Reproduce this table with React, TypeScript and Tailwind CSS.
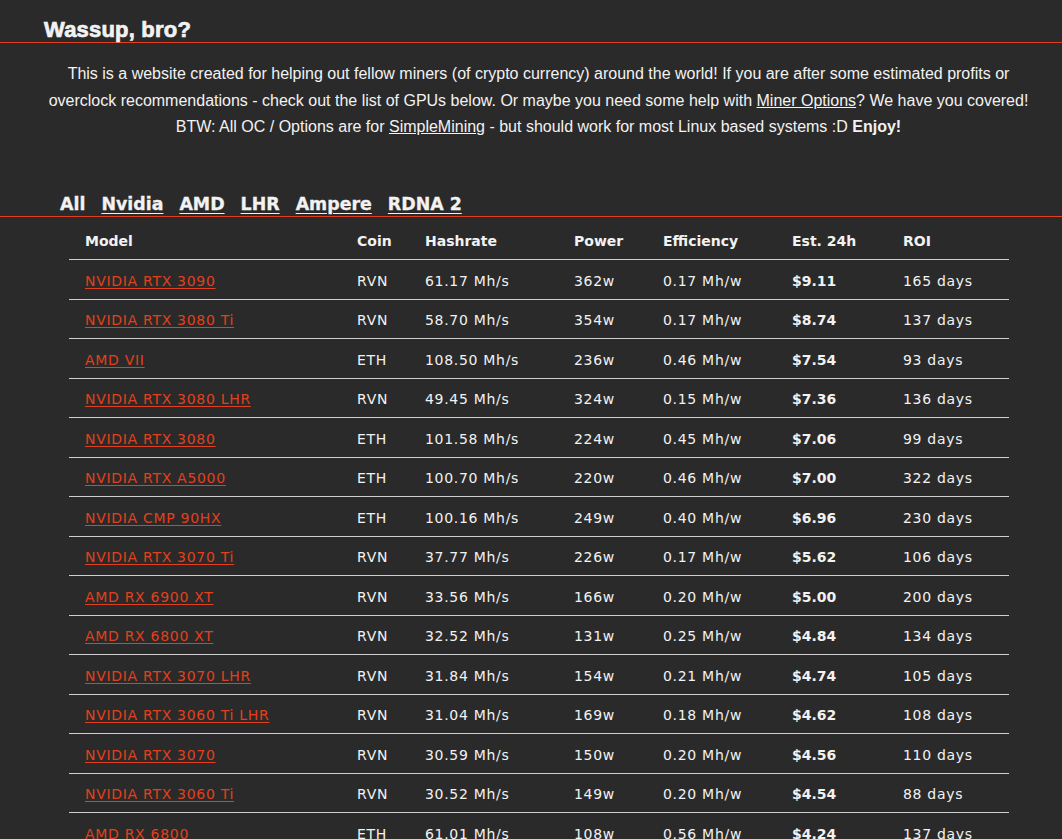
import React from "react";

const rows: [string, string, string, string, string, string, string][] = [
  ["NVIDIA RTX 3090", "RVN", "61.17 Mh/s", "362w", "0.17 Mh/w", "$9.11", "165 days"],
  ["NVIDIA RTX 3080 Ti", "RVN", "58.70 Mh/s", "354w", "0.17 Mh/w", "$8.74", "137 days"],
  ["AMD VII", "ETH", "108.50 Mh/s", "236w", "0.46 Mh/w", "$7.54", "93 days"],
  ["NVIDIA RTX 3080 LHR", "RVN", "49.45 Mh/s", "324w", "0.15 Mh/w", "$7.36", "136 days"],
  ["NVIDIA RTX 3080", "ETH", "101.58 Mh/s", "224w", "0.45 Mh/w", "$7.06", "99 days"],
  ["NVIDIA RTX A5000", "ETH", "100.70 Mh/s", "220w", "0.46 Mh/w", "$7.00", "322 days"],
  ["NVIDIA CMP 90HX", "ETH", "100.16 Mh/s", "249w", "0.40 Mh/w", "$6.96", "230 days"],
  ["NVIDIA RTX 3070 Ti", "RVN", "37.77 Mh/s", "226w", "0.17 Mh/w", "$5.62", "106 days"],
  ["AMD RX 6900 XT", "RVN", "33.56 Mh/s", "166w", "0.20 Mh/w", "$5.00", "200 days"],
  ["AMD RX 6800 XT", "RVN", "32.52 Mh/s", "131w", "0.25 Mh/w", "$4.84", "134 days"],
  ["NVIDIA RTX 3070 LHR", "RVN", "31.84 Mh/s", "154w", "0.21 Mh/w", "$4.74", "105 days"],
  ["NVIDIA RTX 3060 Ti LHR", "RVN", "31.04 Mh/s", "169w", "0.18 Mh/w", "$4.62", "108 days"],
  ["NVIDIA RTX 3070", "RVN", "30.59 Mh/s", "150w", "0.20 Mh/w", "$4.56", "110 days"],
  ["NVIDIA RTX 3060 Ti", "RVN", "30.52 Mh/s", "149w", "0.20 Mh/w", "$4.54", "88 days"],
  ["AMD RX 6800", "ETH", "61.01 Mh/s", "108w", "0.56 Mh/w", "$4.24", "137 days"],
  ["NVIDIA RTX 3060 LHR", "ETH", "48.20 Mh/s", "115w", "0.42 Mh/w", "$4.10", "80 days"],
  ["AMD RX 6700 XT", "ETH", "47.10 Mh/s", "104w", "0.45 Mh/w", "$3.98", "121 days"],
];

const cols = "grid grid-cols-[272px_68px_149px_89px_129px_111px_122px]";

export default function App() {
  return (
    <div className="min-h-[839px] bg-[#2a2a2a] text-[#f2f2f2] overflow-hidden">
      <h1 className="border-b border-[#e2401c] pl-[44px] pt-[18px] h-[43px] leading-[24px] text-[22px] font-bold tracking-[0.2px] [-webkit-text-stroke:0.7px_#f2f2f2] font-['Liberation_Sans',Arial,sans-serif]">
        Wassup, bro?
      </h1>
      <p className="mt-[18px] pl-[48px] pr-[33px] text-center text-[16px] leading-[26.5px] font-['Liberation_Sans',Arial,sans-serif]">
        This is a website created for helping out fellow miners (of crypto currency) around the world! If you are after some estimated profits or
        <br />
        overclock recommendations - check out the list of GPUs below. Or maybe you need some help with{" "}
        <a className="underline">Miner Options</a>? We have you covered!
        <br />
        BTW: All OC / Options are for <a className="underline">SimpleMining</a> - but should work for most Linux based systems :D{" "}
        <b>Enjoy!</b>
      </p>
      <div className="mt-[49.5px] border-b border-[#e2401c] pl-[60px] h-[27px] pt-[1px] flex items-center gap-[16px] text-[17.4px] leading-[26px] font-bold font-['DejaVu_Sans',Verdana,sans-serif] [-webkit-text-stroke:0.3px_#f2f2f2]">
        <span>All</span>
        <a className="underline underline-offset-[3px]">Nvidia</a>
        <a className="underline underline-offset-[3px]">AMD</a>
        <a className="underline underline-offset-[3px]">LHR</a>
        <a className="underline underline-offset-[3px]">Ampere</a>
        <a className="underline underline-offset-[3px]">RDNA 2</a>
      </div>
      <div className="ml-[69px] mt-[4px] w-[940px] text-[14px] font-['DejaVu_Sans',Verdana,sans-serif]">
        <div className={`${cols} h-[39px] pt-[3px] items-center border-b border-[#cfcfcf] font-bold`}>
          {["Model", "Coin", "Hashrate", "Power", "Efficiency", "Est. 24h", "ROI"].map((h) => (
            <div key={h} className="pl-[16px]">{h}</div>
          ))}
        </div>
        {rows.map((r) => (
          <div key={r[0]} className={`${cols} h-[39.5px] pt-[4px] items-center border-b border-[#cfcfcf] tracking-[0.7px]`}>
            <div className="pl-[16px]">
              <a className="text-[#e2401c] underline underline-offset-[2px]">{r[0]}</a>
            </div>
            <div className="pl-[16px]">{r[1]}</div>
            <div className="pl-[16px]">{r[2]}</div>
            <div className="pl-[16px]">{r[3]}</div>
            <div className="pl-[16px]">{r[4]}</div>
            <div className="pl-[16px] font-bold tracking-normal">{r[5]}</div>
            <div className="pl-[16px]">{r[6]}</div>
          </div>
        ))}
      </div>
    </div>
  );
}
